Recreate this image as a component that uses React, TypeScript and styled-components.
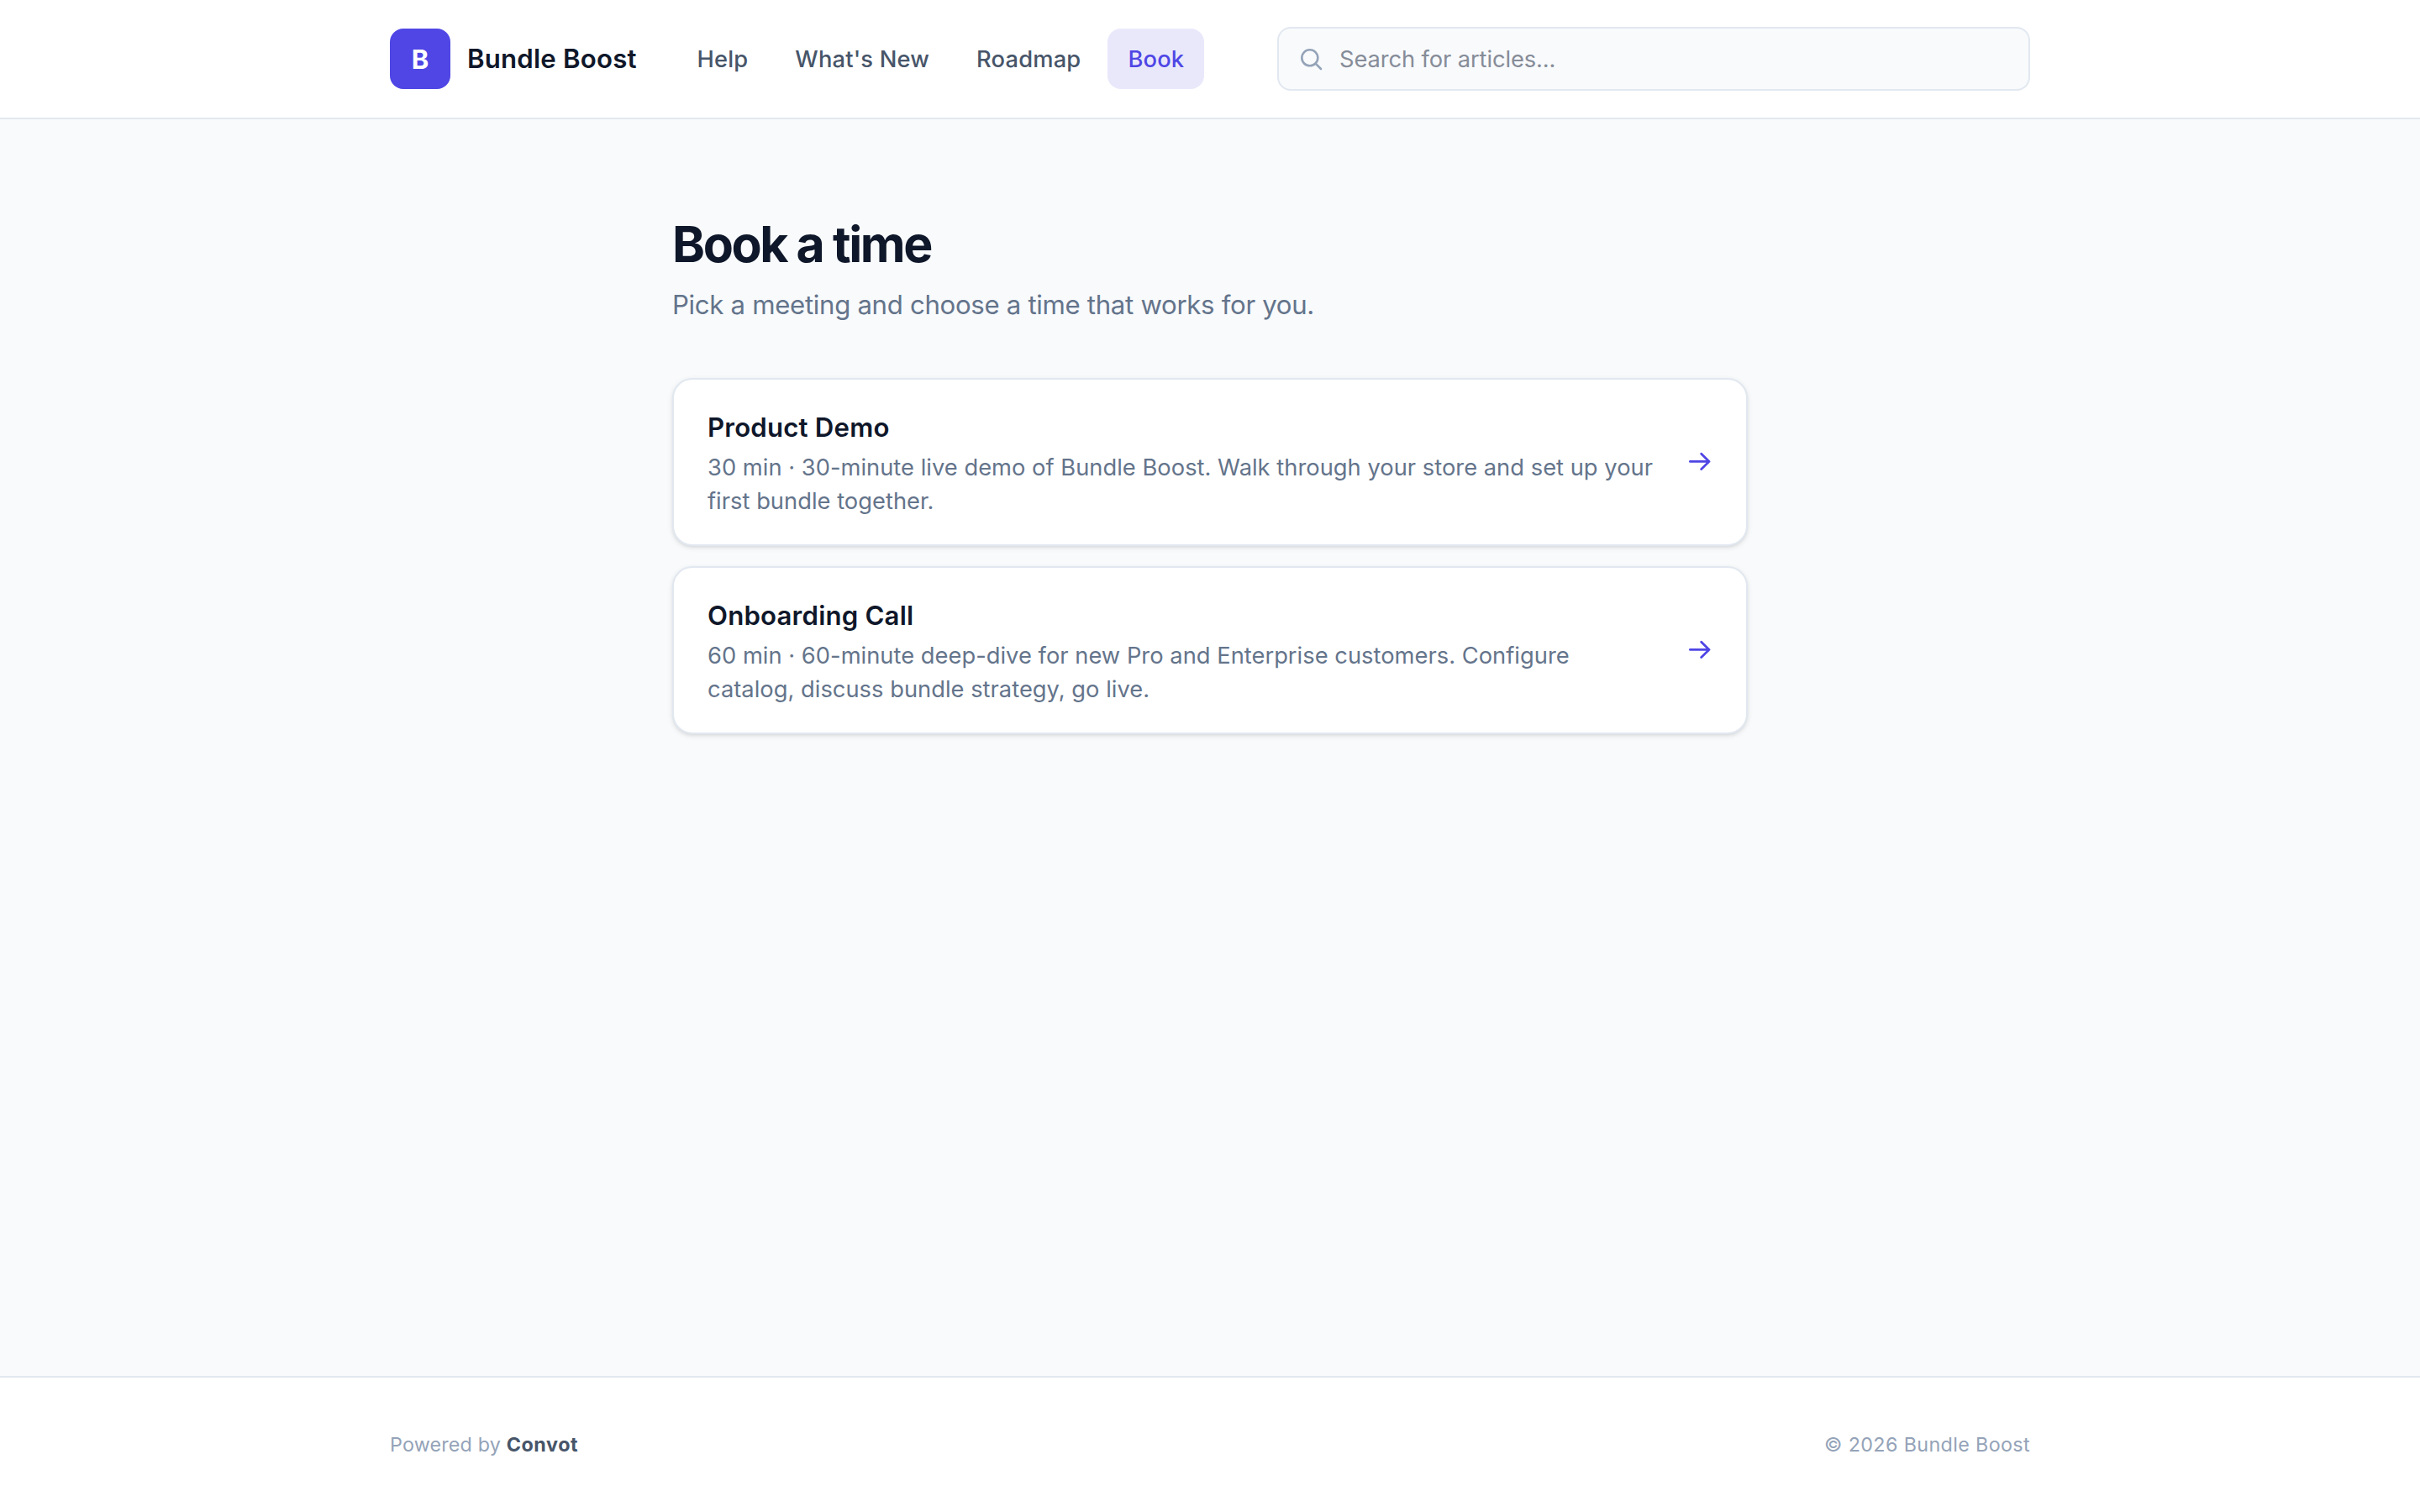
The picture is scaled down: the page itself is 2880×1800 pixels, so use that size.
import React from "react";
import styled, { createGlobalStyle } from "styled-components";

const Global = createGlobalStyle`
  *, *::before, *::after { box-sizing: border-box; }
  body {
    margin: 0;
    background: #f8fafc;
    color: #0f172a;
    font-family: Inter, "Liberation Sans", sans-serif;
    -webkit-font-smoothing: antialiased;
  }
`;

const Page = styled.div`
  min-height: 1800px;
  display: flex;
  flex-direction: column;
`;

const Container = styled.div`
  width: 1952px;
  margin: 0 auto;
  display: flex;
  align-items: center;
`;

const Header = styled.header`
  background: #fff;
  border-bottom: 2px solid #e2e8f0;
  ${Container} { height: 140px; }
`;

const Brand = styled.a`
  display: flex;
  align-items: center;
  gap: 20px;
  width: 293.5px;
  flex: none;
`;

const Logo = styled.span`
  flex: none;
  width: 72px;
  height: 72px;
  border-radius: 16px;
  background: #4f46e5;
  color: #fff;
  display: flex;
  align-items: center;
  justify-content: center;
  font-size: 31px;
  font-weight: 700;
`;

const BrandName = styled.span`
  font-size: 31.2px;
  font-weight: 600;
  letter-spacing: 0.2px;
  white-space: nowrap;
`;

const Nav = styled.nav`
  display: flex;
  gap: 8px;
  margin-left: 48px;
  flex: none;
`;

const NavLink = styled.a<{ $active?: boolean }>`
  height: 72px;
  padding: 0 24px;
  border-radius: 16px;
  display: flex;
  align-items: center;
  font-size: 27.3px;
  font-weight: 500;
  letter-spacing: 0.18px;
  white-space: nowrap;
  color: ${(p) => (p.$active ? "#4f46e5" : "#475569")};
  background: ${(p) => (p.$active ? "#e9e8fb" : "transparent")};
`;

const Search = styled.div`
  margin-left: auto;
  width: 896px;
  height: 76px;
  padding-left: 24px;
  border: 2px solid #e2e8f0;
  border-radius: 16px;
  background: #f8fafc;
  display: flex;
  align-items: center;
  gap: 20px;
  color: #94a3b8;
`;

const Placeholder = styled.span`
  font-size: 27.3px;
  letter-spacing: -0.1px;
  color: #868c98;
`;

const Main = styled.main`
  flex: 1;
  width: 1280px;
  margin: 0 auto;
  padding-top: 113px;
`;

const Title = styled.h1`
  margin: 0;
  font-size: 59px;
  line-height: 72px;
  font-weight: 700;
  letter-spacing: -2.4px;
`;

const Subtitle = styled.p`
  margin: 12px 0 0;
  font-size: 31.2px;
  line-height: 48px;
  letter-spacing: -0.32px;
  color: #64748b;
`;

const List = styled.div`
  margin-top: 63px;
  display: flex;
  flex-direction: column;
  gap: 24px;
`;

const Card = styled.a`
  height: 200px;
  padding: 0 40px;
  background: #fff;
  border: 2px solid #e2e8f0;
  border-radius: 24px;
  box-shadow: 0 2px 6px rgba(0, 0, 0, 0.1), 0 2px 4px -2px rgba(0, 0, 0, 0.1);
  display: flex;
  align-items: center;
  justify-content: space-between;
`;

const CardText = styled.div`
  width: 1132px;
`;

const CardTitle = styled.h2`
  margin: 0 0 4px;
  padding-top: 2px;
  font-size: 31.2px;
  line-height: 48px;
  font-weight: 600;
  letter-spacing: 0.18px;
`;

const CardDesc = styled.p`
  margin: 0;
  font-size: 27.3px;
  line-height: 40px;
  letter-spacing: 0.02px;
  color: #64748b;
`;

const Footer = styled.footer`
  background: #fff;
  border-top: 2px solid #e2e8f0;
  ${Container} {
    height: 160px;
    padding-bottom: 1px;
    justify-content: space-between;
  }
`;

const FooterText = styled.span<{ $tracking: string }>`
  font-size: 23.3px;
  letter-spacing: ${(p) => p.$tracking};
  color: #94a3b8;
  strong { font-weight: 700; letter-spacing: 0.6px; color: #475569; }
`;

const SearchIcon = () => (
  <svg width="28" height="28" viewBox="0 0 28 28" fill="none" stroke="currentColor" strokeWidth="2.6" strokeLinecap="round">
    <circle cx="12.8" cy="12.8" r="9.5" />
    <path d="M19.6 19.6L26 26" />
  </svg>
);

const ArrowIcon = () => (
  <svg width="32" height="32" viewBox="0 0 32 32" fill="none" stroke="#4f46e5" strokeWidth="2.8" strokeLinecap="round" strokeLinejoin="round">
    <path d="M5.4 15.4H28M18.7 6.2L28 15.4L18.7 24.6" />
  </svg>
);

const links = ["Help", "What's New", "Roadmap", "Book"];

const meetings = [
  {
    title: "Product Demo",
    desc: "30 min · 30-minute live demo of Bundle Boost. Walk through your store and set up your first bundle together.",
  },
  {
    title: "Onboarding Call",
    desc: "60 min · 60-minute deep-dive for new Pro and Enterprise customers. Configure catalog, discuss bundle strategy, go live.",
  },
];

export default function App() {
  return (
    <Page>
      <Global />
      <Header>
        <Container>
          <Brand>
            <Logo>B</Logo>
            <BrandName>Bundle Boost</BrandName>
          </Brand>
          <Nav>
            {links.map((l) => (
              <NavLink key={l} $active={l === "Book"}>{l}</NavLink>
            ))}
          </Nav>
          <Search>
            <SearchIcon />
            <Placeholder>Search for articles...</Placeholder>
          </Search>
        </Container>
      </Header>
      <Main>
        <Title>Book a time</Title>
        <Subtitle>Pick a meeting and choose a time that works for you.</Subtitle>
        <List>
          {meetings.map((m) => (
            <Card key={m.title}>
              <CardText>
                <CardTitle>{m.title}</CardTitle>
                <CardDesc>{m.desc}</CardDesc>
              </CardText>
              <ArrowIcon />
            </Card>
          ))}
        </List>
      </Main>
      <Footer>
        <Container>
          <FooterText $tracking="0.17px">Powered by <strong>Convot</strong></FooterText>
          <FooterText $tracking="0.37px">© 2026 Bundle Boost</FooterText>
        </Container>
      </Footer>
    </Page>
  );
}
